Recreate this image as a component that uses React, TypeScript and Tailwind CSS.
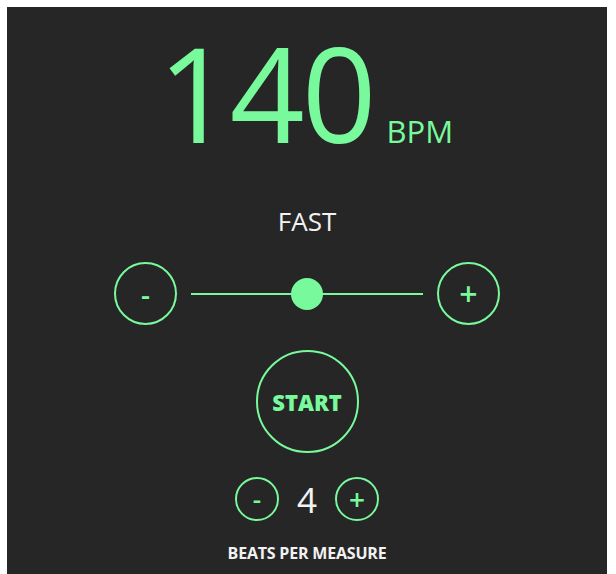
import React from "react";

const F = { fontFamily: '"Open Sans", "Liberation Sans", sans-serif' };

export default function App() {
  return (
    <div className="min-h-screen bg-white pt-[7px] pl-[7px]" style={F}>
      <div className="w-[600px] h-[567px] bg-[#262626] flex flex-col items-center pt-[20px]">
        <div className="flex items-baseline text-[#78fa9c] ml-[-3px]">
          <span className="text-[131px] leading-none tracking-[-3px]">140</span>
          <span className="text-[31px] leading-none ml-[13px]">BPM</span>
        </div>
        <div className="mt-[50px] text-[26px] leading-none text-[#f2f2f2]">FAST</div>
        <div className="mt-[28px] flex items-center">
          <button className="w-[63px] h-[63px] rounded-full border-2 border-[#78fa9c] text-[#78fa9c] text-[28px] font-semibold leading-none flex items-center justify-center">
            -
          </button>
          <div className="relative w-[232px] h-[2px] bg-[#78fa9c] mx-[14px]">
            <div className="absolute left-[100px] top-[-15px] w-[32px] h-[32px] rounded-full bg-[#78fa9c]" />
          </div>
          <button className="w-[63px] h-[63px] rounded-full border-2 border-[#78fa9c] text-[#78fa9c] text-[32px] font-semibold leading-none flex items-center justify-center">
            +
          </button>
        </div>
        <button className="mt-[25px] w-[103px] h-[103px] rounded-full border-2 border-[#78fa9c] text-[#78fa9c] text-[22px] font-extrabold leading-none flex items-center justify-center">
          START
        </button>
        <div className="mt-[24px] flex items-center">
          <button className="w-[44px] h-[44px] rounded-full border-2 border-[#78fa9c] text-[#78fa9c] text-[26px] font-semibold leading-none flex items-center justify-center">
            -
          </button>
          <span className="mx-[18px] text-[35px] leading-none text-[#f2f2f2]">4</span>
          <button className="w-[44px] h-[44px] rounded-full border-2 border-[#78fa9c] text-[#78fa9c] text-[28px] font-semibold leading-none flex items-center justify-center">
            +
          </button>
        </div>
        <div className="mt-[24px] text-[16px] font-bold leading-none text-[#f2f2f2] tracking-[-0.2px]">
          BEATS PER MEASURE
        </div>
      </div>
    </div>
  );
}
